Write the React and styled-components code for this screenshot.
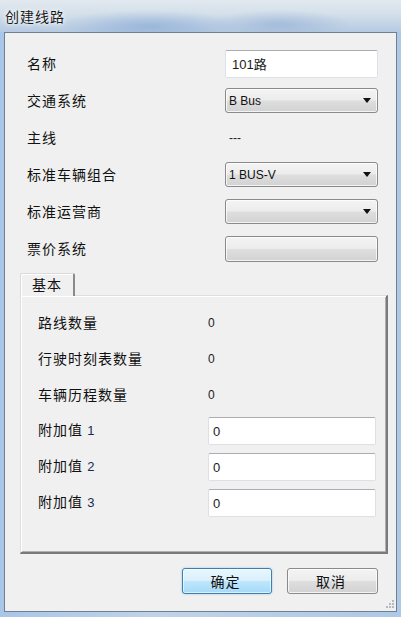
import React from "react";
import styled, { createGlobalStyle } from "styled-components";

const GlobalStyle = createGlobalStyle`
  html, body {
    margin: 0;
    padding: 0;
    overflow: hidden;
    background: #b9cfe6;
  }
`;

const cjk = `"Noto Sans CJK SC", "Noto Sans", sans-serif`;
const latin = `"Liberation Sans", "Noto Sans CJK SC", sans-serif`;

const Window = styled.div`
  width: 401px;
  height: 617px;
  display: flex;
  flex-direction: column;
  background: linear-gradient(90deg, #a9c6e8 0%, #c0d3e8 40%, #aec8e6 100%);
`;

const TitleBar = styled.div`
  height: 32px;
  flex: none;
  display: flex;
  align-items: center;
  padding-left: 5px;
  background:
    radial-gradient(ellipse 90px 16px at 150px 26px, rgba(130, 165, 210, 0.6), transparent),
    radial-gradient(ellipse 70px 14px at 280px 24px, rgba(140, 170, 210, 0.55), transparent),
    linear-gradient(180deg, #e2e9ef 0%, #d3dfea 45%, #b5cae2 100%);
`;

const Title = styled.span`
  font-family: ${cjk};
  font-size: 14px;
  line-height: 16px;
  letter-spacing: 1px;
  color: #1a1a1a;
  text-shadow: 0 0 6px #fff, 0 0 3px #fff;
`;

const Client = styled.div`
  position: relative;
  flex: 1;
  margin: 0 4px 5px;
  background: #f0f0f0;
  border: 1px solid #6f7f92;
  display: flex;
  flex-direction: column;
`;

const FormGrid = styled.div`
  display: grid;
  grid-template-columns: ${(p) => p.$label}px ${(p) => p.$field}px;
  grid-auto-rows: ${(p) => p.$row}px;
  align-items: center;
  padding: ${(p) => p.$pad};
`;

const Label = styled.span`
  font-family: ${cjk};
  font-size: 14px;
  line-height: 16px;
  letter-spacing: 1px;
  color: #111;
  white-space: nowrap;
  margin-top: -2px;

  b {
    font-weight: normal;
    font-family: ${latin};
    font-size: 13px;
    letter-spacing: 0;
    color: #1a2a55;
  }
`;

const Value = styled.span`
  font-family: ${latin};
  font-size: 12px;
  color: #222;
  padding-left: ${(p) => p.$indent || 0}px;
`;

const TextBox = styled.div`
  height: ${(p) => p.$h}px;
  box-sizing: border-box;
  background: #fff;
  border: 1px solid #dde1e7;
  border-top-color: #abadb3;
  border-radius: 2px;
  display: flex;
  align-items: center;
  padding-left: ${(p) => p.$pad}px;
  font-family: ${latin};
  font-size: 13px;
  color: #1b1b1b;
`;

const ButtonFace = styled.div`
  box-sizing: border-box;
  height: ${(p) => p.$h || 26}px;
  width: ${(p) => (p.$w ? `${p.$w}px` : "auto")};
  border: 1px solid #8a8a8a;
  border-radius: 3px;
  background: linear-gradient(180deg, #f4f4f4 0%, #ececec 48%, #dedede 52%, #d2d2d2 100%);
  box-shadow: inset 0 0 0 1px rgba(255, 255, 255, 0.75);
  display: flex;
  align-items: center;
  justify-content: ${(p) => (p.$center ? "center" : "space-between")};
  padding: 0 6px 0 3px;
  font-family: ${latin};
  font-size: 12px;
  color: #111;
`;

const DefaultButton = styled(ButtonFace)`
  border-color: #3c7fb1;
  background: linear-gradient(180deg, #eaf6fd 0%, #d9f0fc 48%, #bee6fd 52%, #a7d9f5 100%);
  box-shadow: inset 0 0 0 1px rgba(255, 255, 255, 0.6), 0 0 2px #7fc4ec;
`;

const ButtonText = styled.span`
  font-family: ${cjk};
  font-size: 14px;
  line-height: 16px;
  letter-spacing: 1px;
  color: #111;
`;

const Arrow = () => (
  <svg width="8" height="5" viewBox="0 0 8 5">
    <path d="M0 0h8L4 5z" fill="#111" />
  </svg>
);

const Combo = ({ value }) => (
  <ButtonFace $h={25}>
    <span>{value}</span>
    <Arrow />
  </ButtonFace>
);

const TabArea = styled.div`
  margin: 5px 8px 0 15px;
  display: flex;
  flex-direction: column;
`;

const TabStrip = styled.div`
  display: flex;
  height: 23px;
  align-items: flex-end;
`;

const Tab = styled.div`
  width: 55px;
  height: 23px;
  box-sizing: border-box;
  border: 1px solid #dadada;
  border-bottom: none;
  border-right: 2px solid #8a8a8a;
  border-radius: 2px 2px 0 0;
  box-shadow: inset 1px 1px 0 #fff;
  background: #f0f0f0;
  display: flex;
  align-items: center;
  justify-content: center;
  margin-bottom: -1px;
  position: relative;
  z-index: 1;
`;

const Panel = styled.div`
  height: 259px;
  box-sizing: border-box;
  border-top: 1px solid #dedede;
  border-left: 1px solid #dedede;
  border-right: 2px solid #7a7a7a;
  border-bottom: 2px solid #7a7a7a;
  box-shadow: inset 1px 1px 0 #fff, inset -1px -1px 0 #b0b0b0;
`;

const ButtonRow = styled.div`
  display: flex;
  justify-content: flex-end;
  gap: 15px;
  margin-top: 14px;
  padding-right: 18px;
`;

const Grip = styled.svg`
  position: absolute;
  right: 2px;
  bottom: 2px;
`;

const SizeGrip = () => (
  <Grip width="10" height="10" viewBox="0 0 10 10">
    {[
      [8, 0],
      [5, 3],
      [8, 3],
      [2, 6],
      [5, 6],
      [8, 6],
    ].map(([x, y]) => (
      <rect key={`${x}-${y}`} x={x} y={y + 1} width="2" height="2" fill="#b5b9c0" />
    ))}
  </Grip>
);

export default function App() {
  return (
    <>
      <GlobalStyle />
      <Window>
        <TitleBar>
          <Title>创建线路</Title>
        </TitleBar>
        <Client>
          <FormGrid $label={198} $field={153} $row={37} $pad="12px 0 0 22px">
            <Label>名称</Label>
            <TextBox $h={28} $pad={6}>101路</TextBox>
            <Label>交通系统</Label>
            <Combo value="B Bus" />
            <Label>主线</Label>
            <Value $indent={4}>---</Value>
            <Label>标准车辆组合</Label>
            <Combo value="1 BUS-V" />
            <Label>标准运营商</Label>
            <Combo value="" />
            <Label>票价系统</Label>
            <ButtonFace $h={26} />
          </FormGrid>

          <TabArea>
            <TabStrip>
              <Tab>
                <Label>基本</Label>
              </Tab>
            </TabStrip>
            <Panel>
              <FormGrid $label={170} $field={168} $row={36} $pad="9px 0 0 17px">
                <Label>路线数量</Label>
                <Value>0</Value>
                <Label>行驶时刻表数量</Label>
                <Value>0</Value>
                <Label>车辆历程数量</Label>
                <Value>0</Value>
                <Label>
                  附加值 <b>1</b>
                </Label>
                <TextBox $h={28} $pad={4}>0</TextBox>
                <Label>
                  附加值 <b>2</b>
                </Label>
                <TextBox $h={28} $pad={4}>0</TextBox>
                <Label>
                  附加值 <b>3</b>
                </Label>
                <TextBox $h={28} $pad={4}>0</TextBox>
              </FormGrid>
            </Panel>
          </TabArea>

          <ButtonRow>
            <DefaultButton $w={90} $center>
              <ButtonText>确定</ButtonText>
            </DefaultButton>
            <ButtonFace $w={91} $center>
              <ButtonText>取消</ButtonText>
            </ButtonFace>
          </ButtonRow>
          <SizeGrip />
        </Client>
      </Window>
    </>
  );
}
